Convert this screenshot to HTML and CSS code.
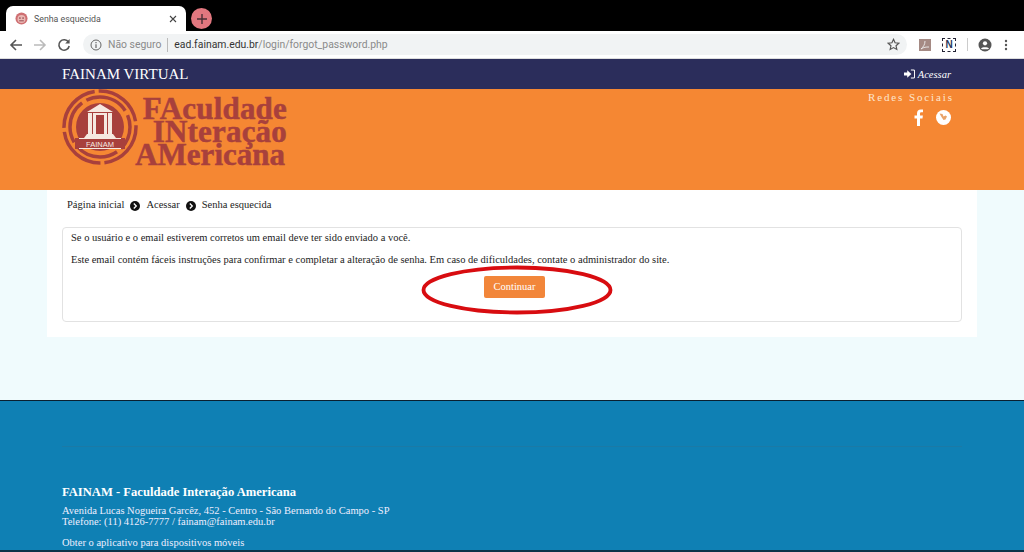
FILE: index.html
```html
<!DOCTYPE html>
<html lang="pt-BR">
<head>
  <meta charset="UTF-8" />
  <title>Senha esquecida</title>
  <link rel="stylesheet" href="styles.css">
</head>
<body>
  <div class="tab-strip">
    <div class="tab">
      <svg class="favicon" width="13" height="13" viewBox="0 0 14 14">
        <circle cx="7" cy="7" r="6.500" fill="#cf6f72"/>
        <circle cx="7" cy="7.500" r="4.300" fill="#eab8b4"/>
        <circle cx="5.300" cy="6.500" r="0.900" fill="#8c4448"/>
        <circle cx="8.700" cy="6.500" r="0.900" fill="#8c4448"/>
        <path d="M4.500 9.500h5" stroke="#8c4448" stroke-width="1"/>
      </svg>
      <span class="tab-title">Senha esquecida</span>
      <svg class="tab-close" width="8" height="8" viewBox="0 0 8 8">
        <path d="M1 1l6 6M7 1l-6 6" stroke="#444" stroke-width="1.100"/>
      </svg>
    </div>
    <div class="new-tab">
      <svg width="10" height="10" viewBox="0 0 10 10">
        <path d="M5 0v10M0 5h10" stroke="#4a3036" stroke-width="1.400"/>
      </svg>
    </div>
  </div>

  <div class="toolbar">
    <svg class="tool-icon" width="14" height="14" viewBox="0 0 14 14">
      <path d="M13 7H2M7 2L2 7l5 5" fill="none" stroke="#555" stroke-width="1.600"/>
    </svg>
    <svg class="tool-icon" width="14" height="14" viewBox="0 0 14 14">
      <path d="M1 7h11M7 2l5 5-5 5" fill="none" stroke="#bbb" stroke-width="1.600"/>
    </svg>
    <svg class="tool-icon" width="14" height="14" viewBox="0 0 14 14">
      <path d="M11.500 4.200A5.200 5.200 0 1 0 12.200 8" fill="none" stroke="#555" stroke-width="1.600"/>
      <path d="M12.600 1v4.400H8.200z" fill="#555"/>
    </svg>
    <div class="omnibox">
      <svg width="12" height="12" viewBox="0 0 12 12">
        <circle cx="6" cy="6" r="5" fill="none" stroke="#666" stroke-width="1"/>
        <path d="M6 5.200V9M6 3v1.200" stroke="#666" stroke-width="1.200"/>
      </svg>
      <span class="not-secure">Não seguro</span>
      <span class="omni-sep"></span>
      <span class="url"><b>ead.fainam.edu.br</b>/login/forgot_password.php</span>
      <svg class="star" width="13" height="13" viewBox="0 0 24 24">
        <path d="M12 2.500l2.900 6.300 6.900.8-5.100 4.700 1.400 6.800-6.100-3.400-6.100 3.400 1.400-6.800-5.100-4.700 6.900-.8z" fill="none" stroke="#555" stroke-width="2.200"/>
      </svg>
    </div>
    <div class="ext-pdf">
      <svg width="10" height="10" viewBox="0 0 10 10">
        <path d="M5 1c0 4-2 6-4 8 3-2 5-2 8-2" fill="none" stroke="#eee" stroke-width="0.900"/>
      </svg>
    </div>
    <div class="ext-n">N</div>
    <span class="tool-sep"></span>
    <svg width="14" height="14" viewBox="0 0 14 14">
      <circle cx="7" cy="7" r="6.500" fill="#555"/>
      <circle cx="7" cy="5.300" r="2.100" fill="#fff"/>
      <path d="M3 10.400c1-1.600 7-1.600 8 0-1 1.200-7 1.200-8 0z" fill="#fff"/>
    </svg>
    <svg class="menu-dots" width="4" height="12" viewBox="0 0 4 12">
      <circle cx="2" cy="2" r="1.200" fill="#555"/>
      <circle cx="2" cy="6" r="1.200" fill="#555"/>
      <circle cx="2" cy="10" r="1.200" fill="#555"/>
    </svg>
  </div>

  <nav class="navbar">
    <a class="brand">FAINAM VIRTUAL</a>
    <a class="login-link">
      <svg width="11" height="10" viewBox="0 0 12 10">
        <path d="M0 3.400h3.500V1L8 5 3.500 9V6.600H0z" fill="#fff"/>
        <path d="M7.500 .7h3a1 1 0 0 1 1 1v6.600a1 1 0 0 1-1 1h-3" fill="none" stroke="#fff" stroke-width="1.100"/>
      </svg>
      <i>Acessar</i>
    </a>
  </nav>

  <header class="page-header">
    <div class="logo">
      <svg width="76" height="76" viewBox="0 0 76 76">
        <circle cx="38" cy="38" r="36" fill="none" stroke="#a8403c" stroke-width="3.500" stroke-dasharray="52 4"/>
        <circle cx="38" cy="38" r="30" fill="none" stroke="#a8403c" stroke-width="3.500" stroke-dasharray="44 5" stroke-dashoffset="20"/>
        <circle cx="38" cy="38" r="24" fill="#a8403c"/>
        <path d="M25 23l13-8 13 8z" fill="#f6e9e0"/>
        <rect x="26" y="24" width="4" height="21" fill="#f6e9e0"/>
        <rect x="31" y="24" width="3" height="21" fill="#f6e9e0"/>
        <rect x="42" y="24" width="3" height="21" fill="#f6e9e0"/>
        <rect x="46" y="24" width="4" height="21" fill="#f6e9e0"/>
        <rect x="34" y="24" width="8" height="2" fill="#f6e9e0"/>
        <path d="M22 49l3-4h26l3 4z" fill="#f6e9e0"/>
        <rect x="13" y="49" width="50" height="11" fill="#a8403c"/>
        <rect x="17" y="49" width="42" height="1" fill="#f6e9e0"/>
        <rect x="17" y="59" width="42" height="1" fill="#f6e9e0"/>
        <text class="logo-seal" x="38" y="57.500" text-anchor="middle">FAINAM</text>
      </svg>
      <div class="logo-name">
        <div>FAculdade</div>
        <div>INteração</div>
        <div class="logo-last">AMericana</div>
      </div>
    </div>
    <div class="social">
      <div class="social-title">Redes Sociais</div>
      <div class="social-icons">
        <svg width="10" height="17" viewBox="0 0 10 17">
          <path d="M3 17V9.500H.5V6.600H3V4.500C3 1.800 4.500.5 6.800.5c1 0 1.900.1 2.200.1v2.700H7.400C6.200 3.300 6 3.900 6 4.800v1.800h2.900l-.4 2.900H6V17z" fill="#fff"/>
        </svg>
        <svg width="15" height="15" viewBox="0 0 15 15">
          <circle cx="7.500" cy="7.500" r="7.500" fill="#fff"/>
          <path d="M3.500 3.500l3 .5 1 2.500 2-1 1.500 1-1.500 3-2 .5-2-3z" fill="#e9a36a"/>
        </svg>
      </div>
    </div>
  </header>

  <main class="page-body">
    <div class="panel">
      <ol class="breadcrumb">
        <li>Página inicial</li>
        <li class="crumb-sep">
          <svg width="10" height="10" viewBox="0 0 10 10">
            <circle cx="5" cy="5" r="5" fill="#111"/>
            <path d="M3.800 2.500L6.300 5 3.800 7.500" fill="none" stroke="#fff" stroke-width="1.300"/>
          </svg>
        </li>
        <li>Acessar</li>
        <li class="crumb-sep">
          <svg width="10" height="10" viewBox="0 0 10 10">
            <circle cx="5" cy="5" r="5" fill="#111"/>
            <path d="M3.800 2.500L6.300 5 3.800 7.500" fill="none" stroke="#fff" stroke-width="1.300"/>
          </svg>
        </li>
        <li>Senha esquecida</li>
      </ol>
      <div class="card">
        <p>Se o usuário e o email estiverem corretos um email deve ter sido enviado a você.</p>
        <p>Este email contém fáceis instruções para confirmar e completar a alteração de senha. Em caso de dificuldades, contate o administrador do site.</p>
        <div class="card-actions">
          <button class="btn-continue">Continuar</button>
          <svg class="highlight" width="196" height="52" viewBox="0 0 196 52">
            <ellipse cx="98" cy="26" rx="93.500" ry="22.500" fill="none" stroke="#d80c10" stroke-width="3.800"/>
          </svg>
        </div>
      </div>
    </div>
  </main>

  <footer class="page-footer">
    <hr class="footer-rule">
    <h4>FAINAM - Faculdade Interação Americana</h4>
    <p class="address">Avenida Lucas Nogueira Garcêz, 452 - Centro - São Bernardo do Campo - SP<br>Telefone: (11) 4126-7777 / fainam@fainam.edu.br</p>
    <p class="app-link">Obter o aplicativo para dispositivos móveis</p>
  </footer>
</body>
</html>
```
FILE: styles.css
```css
html, body {
  height: 552px;
  overflow: hidden;
}

body {
  margin: 0;
  font-family: "Liberation Serif", serif;
  font-size: 10.500px;
  color: #1c1c1c;
  background: #0f80b4;
}

/* browser chrome */
.tab-strip {
  height: 31px;
  background: #000;
  display: flex;
  align-items: flex-end;
  padding-left: 6px;
}

.tab {
  width: 180px;
  height: 25px;
  box-sizing: border-box;
  background: #fff;
  border-radius: 7px 7px 0 0;
  display: flex;
  align-items: center;
  padding: 0 9px;
  font-family: "Roboto", sans-serif;
  font-size: 8.800px;
  color: #555;
}

.tab-title {
  margin-left: 6px;
  flex: 1;
}

.new-tab {
  width: 21px;
  height: 21px;
  margin: 0 0 2px 5px;
  border-radius: 50%;
  background: #e2777f;
  display: flex;
  align-items: center;
  justify-content: center;
}

.toolbar {
  height: 28px;
  box-sizing: border-box;
  background: #fff;
  border-bottom: 1px solid #ddd;
  display: flex;
  align-items: center;
  padding: 0 13px 0 9px;
}

.tool-icon {
  margin-right: 10px;
}

.omnibox {
  width: 824px;
  height: 21px;
  box-sizing: border-box;
  margin-left: 2px;
  border-radius: 11px;
  background: #f1f3f4;
  display: flex;
  align-items: center;
  padding: 0 7px;
  font-family: "Roboto", sans-serif;
  font-size: 10.400px;
  color: #8a8a8a;
}

.not-secure {
  margin-left: 6px;
}

.omni-sep {
  width: 1px;
  height: 14px;
  background: #bbb;
  margin: 0 6px;
}

.url b {
  font-weight: 400;
  color: #333;
}

.star {
  margin-left: auto;
}

.ext-pdf {
  width: 12px;
  height: 12px;
  margin-left: 12px;
  background: #a58a84;
  display: flex;
  align-items: center;
  justify-content: center;
}

.ext-n {
  width: 12px;
  height: 12px;
  margin-left: 11px;
  border: 1px dashed #223;
  font: bold 10px/12px "Liberation Sans", sans-serif;
  color: #2a3a5c;
  text-align: center;
}

.tool-sep {
  width: 1px;
  height: 13px;
  background: #ccc;
  margin: 0 10px 0 11px;
}

.menu-dots {
  margin-left: 12px;
}

/* site header */
.navbar {
  height: 30px;
  box-sizing: border-box;
  background: #2b2d5b;
  display: flex;
  align-items: center;
  justify-content: space-between;
  padding: 0 73px 0 62px;
  color: #fff;
}

.brand {
  font-size: 15px;
}

.login-link {
  display: flex;
  align-items: center;
  gap: 3px;
}

.page-header {
  height: 101px;
  box-sizing: border-box;
  background: #f58733;
  display: flex;
  justify-content: space-between;
  padding: 0 70px 0 62px;
}

.logo {
  display: flex;
  align-items: flex-start;
}

.logo-seal {
  font: 7.500px "Liberation Sans", sans-serif;
  fill: #f6e9e0;
}

.logo-name {
  width: 160px;
  font-weight: bold;
  color: #a8403c;
  -webkit-text-stroke: 0.5px #a8403c;
  line-height: 23px;
  font-size: 31px;
  letter-spacing: 0.2px;
  text-align: right;
  margin: 8px 0 0 -11px;
}

.logo-last {
  margin-right: 2px;
  letter-spacing: 0;
}

.social {
  padding-top: 2px;
  text-align: right;
  color: #fde6cf;
}

.social-title {
  font-size: 11px;
  letter-spacing: 1.900px;
}

.social-icons {
  display: flex;
  justify-content: flex-end;
  align-items: center;
  gap: 12px;
  margin: 6px 3px 0 0;
}

/* content */
.page-body {
  height: 210px;
  background: #f0fbfd;
  padding: 0 47px;
}

.panel {
  height: 147px;
  box-sizing: border-box;
  background: #fff;
  padding: 0 15px;
}

.breadcrumb {
  list-style: none;
  margin: 0;
  padding: 9px 0 0 5px;
  height: 37px;
  box-sizing: border-box;
  display: flex;
  align-items: flex-start;
  gap: 6px;
}

.crumb-sep {
  height: 10px;
  margin-top: 2px;
}

.crumb-sep svg {
  display: block;
}

.card {
  height: 95px;
  box-sizing: border-box;
  border: 1px solid #e2e2e2;
  border-radius: 4px;
  padding: 3px 8px 0;
}

.card p {
  margin: 0 0 8px;
  line-height: 14px;
}

.card-actions {
  position: relative;
  display: flex;
  justify-content: center;
  padding-top: 1px;
}

.btn-continue {
  width: 61px;
  height: 22px;
  margin-left: 5px;
  padding-bottom: 3px;
  border: none;
  border-radius: 2px;
  background: #f2863a;
  color: #fff;
  font-family: "Liberation Serif", serif;
  font-size: 10.500px;
}

.highlight {
  position: absolute;
  left: 348px;
  top: -11px;
}

/* footer */
.page-footer {
  height: 152px;
  box-sizing: border-box;
  background: #0f80b4;
  border-top: 1px solid #0a2030;
  border-bottom: 2px solid #0d3348;
  padding: 45px 62px 0;
  color: #fff;
}

.footer-rule {
  margin: 0 0 38px;
  border: none;
  border-top: 1px solid #1b7aa6;
}

.page-footer h4 {
  margin: 0 0 6px;
  font-size: 12.600px;
  line-height: 14px;
}

.address {
  margin: 0 0 9px;
  line-height: 11px;
  color: #eef;
}

.app-link {
  margin: 0;
  line-height: 14px;
  color: #eef;
}
```
